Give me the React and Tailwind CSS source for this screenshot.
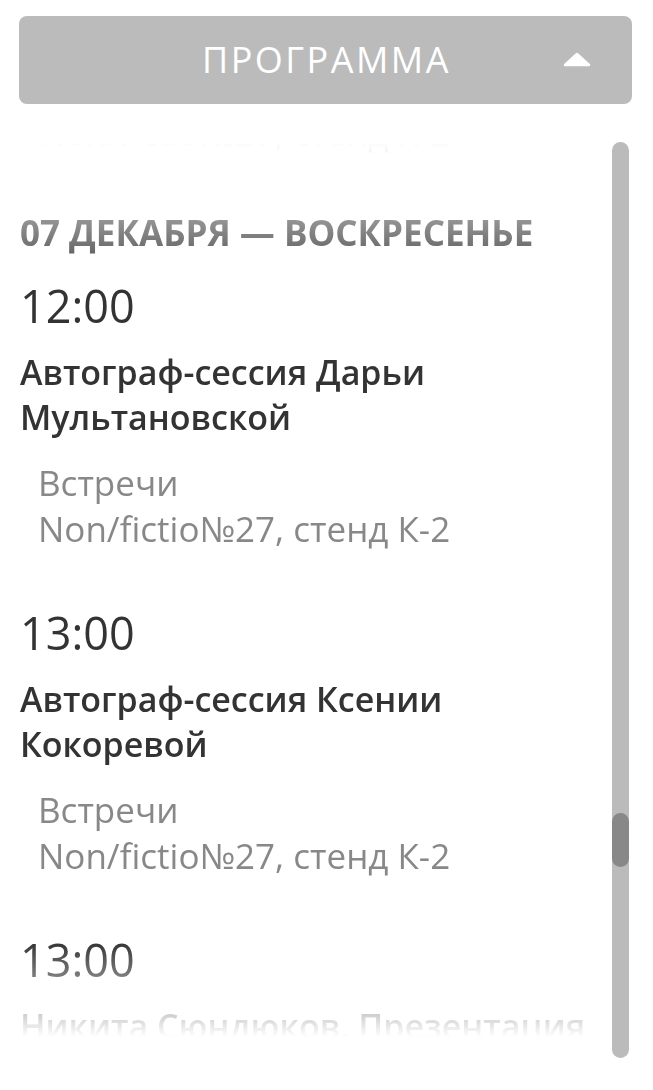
import React from 'react';

const events = [
  { time: '12:00', title: ['Автограф-сессия Дарьи', 'Мультановской'], type: 'Встречи', place: 'Non/fictio№27, стенд К-2' },
  { time: '13:00', title: ['Автограф-сессия Ксении', 'Кокоревой'], type: 'Встречи', place: 'Non/fictio№27, стенд К-2' },
  { time: '13:00', title: ['Никита Сюндюков. Презентация', 'книги'], type: 'Презентации', place: 'Non/fictio№27, стенд К-2' },
];

function EventItem({ event }) {
  return (
    <div className="mb-[56px]">
      <div className="h-[50px] text-[45px] leading-[50px] text-[#333]">{event.time}</div>
      <div className="mt-[19px] text-[34px] leading-[45px] font-semibold text-[#333]">
        {event.title.map((line, i) => (
          <div key={i}>{line}</div>
        ))}
      </div>
      <div className="mt-[20px] pl-[18px] text-[35px] leading-[46px] text-[#888]">
        <div>{event.type}</div>
        <div>{event.place}</div>
      </div>
    </div>
  );
}

export default function App() {
  return (
    <div className="min-h-screen bg-white pt-[16px] pl-[19px] pr-[21px] font-['Open_Sans',sans-serif]">
      {/* Toggle button */}
      <div className="relative flex h-[88px] items-center justify-center rounded-[8px] bg-[#bbbbbb]">
        <span className="ml-[2px] text-[36px] tracking-[2.5px] text-white">ПРОГРАММА</span>
        <svg className="absolute right-[40px] top-[36px]" width="30" height="16" viewBox="0 0 30 16">
          <polygon points="15,2 27,13 3,13" fill="#fff" stroke="#fff" strokeWidth="2.5" strokeLinejoin="round" />
        </svg>
      </div>

      {/* Program list */}
      <div className="mt-[38px] flex h-[916px]">
        <div className="flex-1 overflow-hidden pl-[1px] [mask-image:linear-gradient(to_bottom,transparent_0px,black_112px,black_800px,transparent_895px)] [-webkit-mask-image:linear-gradient(to_bottom,transparent_0px,black_112px,black_800px,transparent_895px)]">
          <div className="-mt-[32px] pl-[18px] text-[35px] leading-[46px] text-[#888]">Non/fictio№27, стенд К-2</div>
          <div className="mt-[57px] h-[40px] text-[35px] leading-[40px] font-bold text-[#666]">
            07 ДЕКАБРЯ — ВОСКРЕСЕНЬЕ
          </div>
          <div className="mt-[28px]">
            {events.map((event, i) => (
              <EventItem key={i} event={event} />
            ))}
          </div>
        </div>

        {/* Scrollbar */}
        <div className="mr-[3px] flex w-[17px] flex-col rounded-full bg-[#bbbbbb]">
          <div className="mt-[671px] h-[54px] w-[17px] rounded-full bg-[#888888]" />
        </div>
      </div>
    </div>
  );
}
